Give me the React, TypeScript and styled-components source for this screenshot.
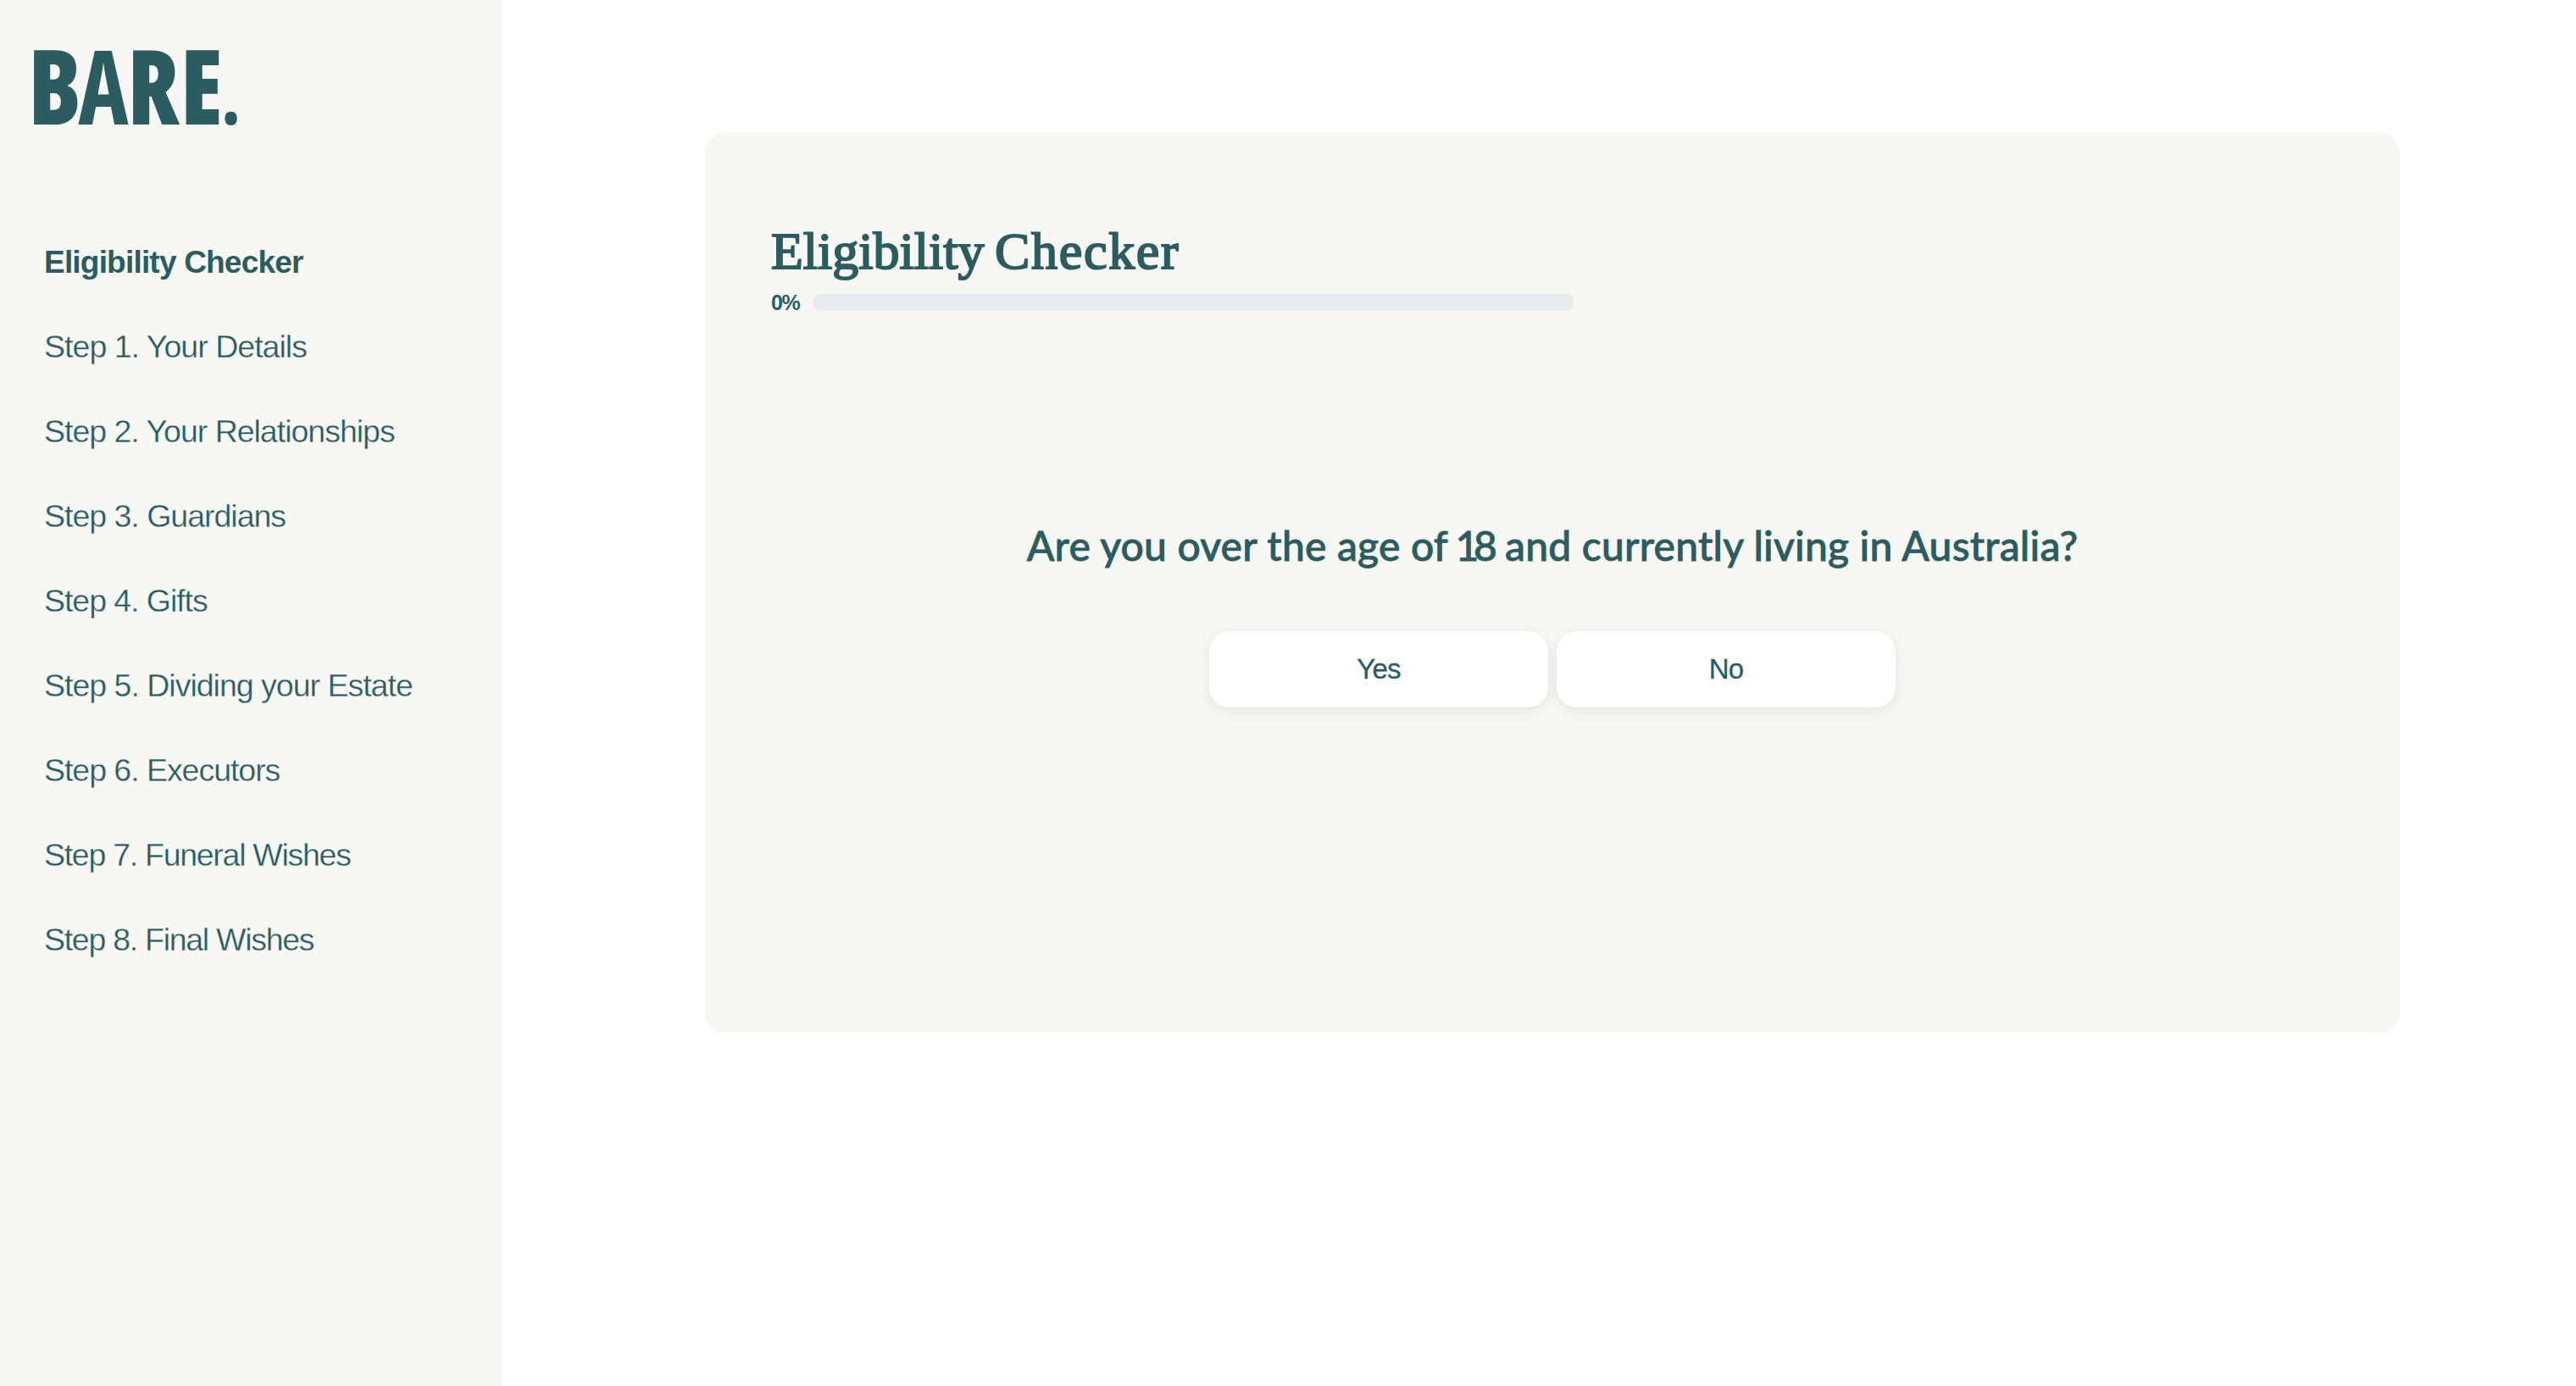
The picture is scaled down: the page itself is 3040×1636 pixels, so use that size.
import React, { useState } from 'react';
import styled, { createGlobalStyle } from 'styled-components';

const teal = '#2b5c5f';
const cream = '#f7f8f3';
const sans = '"Liberation Sans", Arial, sans-serif';

const GlobalStyle = createGlobalStyle`
  *, *::before, *::after { box-sizing: border-box; }
  body { margin: 0; background: #fff; color: ${teal}; font-family: ${sans}; }
`;

const Page = styled.div`
  display: flex;
  min-height: 100vh;
`;

const Sidebar = styled.aside`
  flex: 0 0 592px;
  background: ${cream};
`;

const Logo = styled.svg`
  display: block;
  width: 340px;
  height: 190px;
  fill: ${teal};
  font-family: "Open Sans", sans-serif;
  font-weight: 800;
  font-stretch: 75%;
  font-size: 122px;
`;

const StepList = styled.ul`
  display: flex;
  flex-direction: column;
  margin: 69px 0 0;
  padding: 0 0 0 52px;
  list-style: none;
`;

const StepItem = styled.li<{ $active: boolean; $tracking: number }>`
  display: flex;
  align-items: center;
  height: 100px;
  padding-top: ${(p) => (p.$active ? 2 : 0)}px;
  white-space: nowrap;
  font-size: ${(p) => (p.$active ? 37 : 37.5)}px;
  font-weight: ${(p) => (p.$active ? 700 : 400)};
  letter-spacing: ${(p) => p.$tracking}px;
  -webkit-text-stroke: ${(p) => (p.$active ? 0 : 0.3)}px ${cream};
`;

const Main = styled.main`
  flex: 1;
  padding: 156px 0 0 240px;
`;

const Panel = styled.section`
  width: 2000px;
  height: 1063px;
  padding: 104px 78px 0;
  border-radius: 24px;
  background: ${cream};
`;

const Title = styled.h1`
  margin: 0;
  font-family: "Liberation Serif", "Times New Roman", serif;
  font-size: 62px;
  font-weight: 400;
  line-height: 72px;
  word-spacing: -3px;
  -webkit-text-stroke: 2px ${teal};
`;

const Wide = styled.span`
  letter-spacing: 1.7px;
`;

const Progress = styled.div`
  display: flex;
  align-items: center;
  gap: 15px;
  margin-top: 14px;
  height: 22px;
`;

const Percent = styled.span`
  width: 35px;
  font-size: 25px;
  font-weight: 700;
  line-height: 22px;
  letter-spacing: -1.4px;
`;

const Track = styled.div`
  width: 897px;
  height: 20px;
  border-radius: 8px;
  background: #eaebef;
  overflow: hidden;
`;

const Fill = styled.div`
  height: 100%;
  background: ${teal};
`;

const Question = styled.h2`
  margin: 246px 0 0;
  text-align: center;
  font-family: Lato, sans-serif;
  font-size: 48px;
  font-weight: 500;
  line-height: 60px;
  letter-spacing: 0.2px;
  -webkit-text-stroke: 0.8px ${teal};
`;

const Age = styled.span`
  margin: 0 3px 0 -3px;
  letter-spacing: -6.2px;
`;

const Answers = styled.div`
  display: flex;
  justify-content: center;
  gap: 10px;
  margin-top: 71px;
`;

const Answer = styled.button`
  width: 400px;
  height: 90px;
  padding: 0;
  border: 0;
  border-radius: 24px;
  background: #fff;
  box-shadow: 0 4px 15px rgba(0, 0, 0, 0.08);
  color: ${teal};
  font-family: ${sans};
  font-size: 33px;
  letter-spacing: -0.8px;
  -webkit-text-stroke: 0.3px ${teal};
`;

const steps = [
  { label: 'Eligibility Checker', tracking: -0.8 },
  { label: 'Step 1. Your Details', tracking: -0.97 },
  { label: 'Step 2. Your Relationships', tracking: -1.01 },
  { label: 'Step 3. Guardians', tracking: -1.01 },
  { label: 'Step 4. Gifts', tracking: -1.05 },
  { label: 'Step 5. Dividing your Estate', tracking: -1.0 },
  { label: 'Step 6. Executors', tracking: -1.04 },
  { label: 'Step 7. Funeral Wishes', tracking: -1.28 },
  { label: 'Step 8. Final Wishes', tracking: -1.28 },
];

export default function App() {
  const [current] = useState(0);
  const progress = 0;

  return (
    <>
      <GlobalStyle />
      <Page>
        <Sidebar>
          <Logo viewBox="0 0 340 190" role="img" aria-label="BARE.">
            <text x="36.5" y="147" transform="scale(0.92 1)">
              B
              <tspan x="100.6" fontWeight="700">A</tspan>
              <tspan x="163.7 231.4">RE</tspan>
              <tspan x="284.6" fontSize="86">.</tspan>
            </text>
          </Logo>
          <nav>
            <StepList>
              {steps.map((step, i) => (
                <StepItem key={step.label} $active={i === current} $tracking={step.tracking}>
                  {step.label}
                </StepItem>
              ))}
            </StepList>
          </nav>
        </Sidebar>
        <Main>
          <Panel>
            <Title>
              Eligibility <Wide>Checker</Wide>
            </Title>
            <Progress>
              <Percent>{progress}%</Percent>
              <Track>
                <Fill style={{ width: `${progress}%` }} />
              </Track>
            </Progress>
            <Question>
              Are you over the age of <Age>18</Age> and currently living in Australia?
            </Question>
            <Answers>
              <Answer>Yes</Answer>
              <Answer>No</Answer>
            </Answers>
          </Panel>
        </Main>
      </Page>
    </>
  );
}
